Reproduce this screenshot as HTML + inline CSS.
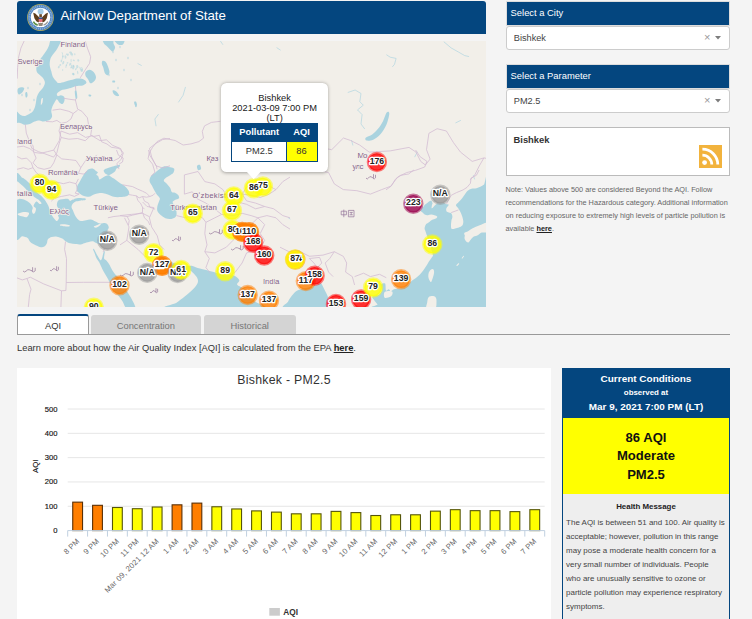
<!DOCTYPE html>
<html><head><meta charset="utf-8"><title>AirNow Department of State</title>
<style>
html,body{margin:0;padding:0}
body{width:752px;height:619px;overflow:hidden;background:#f4f4f4;font-family:"Liberation Sans",sans-serif;position:relative;color:#333}
.abs{position:absolute}
#hdr{left:17px;top:1px;width:469px;height:33px;background:#04467f;border-radius:3px 3px 0 0}
#hdr .t{position:absolute;left:43.4px;top:5.5px;font-size:13.3px;color:#fff;white-space:nowrap;line-height:17px}
#map{left:17px;top:41px;width:469px;height:266px;overflow:hidden;background:#f2efe9}
.sh{left:506px;width:222px;height:23.4px;border:1px solid #ddd;background:#04467f;color:#fff;font-size:9.4px;line-height:21px;text-indent:3.6px;white-space:nowrap}
.sel{left:506px;width:222px;height:22.8px;background:#fff;border:1px solid #ccc;border-radius:3px;font-size:9.2px;line-height:22.8px;text-indent:6.8px;color:#444}
.sel i{position:absolute;font-style:normal;color:#999;top:-.2px;text-indent:0;line-height:21px}
#city{left:506px;top:127px;width:222px;height:47px;background:#fff;border:1px solid #bbb}
#city b{position:absolute;left:6.5px;top:6px;font-size:9.4px;line-height:12px;color:#333}
#note{left:505.5px;top:182.8px;width:240px;font-size:7.33px;line-height:13.07px;color:#666;white-space:nowrap}
#note b{color:#222;text-decoration:underline}
.tab{top:314.5px;height:19.5px;background:#d4d4d4;border-radius:3px 3px 0 0;font-size:9.4px;line-height:21px;text-align:center;color:#777}
#tabA{left:17px;top:313.5px;width:70px;height:19.5px;background:#fff;border:1px solid #999;border-bottom:none;border-top:2px solid #04467f;color:#333;line-height:19px}
#tline{left:17px;top:333.5px;width:713px;height:1px;background:#999}
#learn{left:17px;top:341.5px;font-size:9.34px;line-height:12px;white-space:nowrap;color:#333}
#learn b{text-decoration:underline;color:#222}
#chart{left:17px;top:368px;width:534px;height:251px;background:#fff}
#cc{left:562px;top:368px;width:168px;height:251px;background:#eee;box-sizing:border-box;border-left:1px solid #04467f;border-right:1px solid #04467f}
#cch{left:-1px;top:0;width:168px;height:50px;background:#04467f;color:#fff;text-align:center;font-weight:bold}
#cch div{position:absolute;left:0;width:100%;white-space:nowrap}
#ccy{left:0;top:50px;width:166px;height:76.4px;background:#ffff00;color:#111;text-align:center;font-weight:bold;font-size:13.05px;line-height:18.8px}
#hm{left:0;top:132.5px;width:166px;text-align:center;font-weight:bold;font-size:7.9px;line-height:12px;color:#222}
#hmt{left:3.1px;top:147.8px;font-size:7.97px;line-height:14.05px;color:#444;white-space:nowrap}
</style></head><body>
<div id="hdr" class="abs">
<svg class="abs" style="left:10px;top:3px" width="27" height="27" viewBox="0 0 27 27">
<circle cx="13.5" cy="13.5" r="13.4" fill="#b7ad58"/><circle cx="13.5" cy="13.5" r="12.7" fill="#4c82c0"/><circle cx="13.5" cy="13.5" r="11.3" fill="none" stroke="#8fb3dc" stroke-width="1.7" stroke-dasharray="1.1 .8"/><circle cx="13.5" cy="13.5" r="9.8" fill="#fff"/>
<circle cx="13.6" cy="7.4" r="3" fill="#a6cde6"/>
<path d="M6.2 8.8L8.3 9.6L10.4 11.4L12.1 13.3L12.5 16.6L11.5 18.6L9.3 17.3L7.4 14.3ZM21 8.8L18.9 9.6L16.8 11.4L15.1 13.3L14.7 16.6L15.7 18.6L17.9 17.3L19.8 14.3Z" fill="#5f3f1f"/>
<path d="M12.3 10.2h2.6v3h-2.6z" fill="#6b4a26"/>
<path d="M11.7 13.4h3.8v1.7h-3.8z" fill="#34508c"/><path d="M11.7 15.1h3.8v2.2q-1.9 2-3.8 0z" fill="#e4707c"/>
<path d="M6.4 17.6q1.6 3.2 4.4 3.4" stroke="#5c9048" stroke-width="1.5" fill="none"/><path d="M20.8 17.6q-1.6 3.2-4.4 3.4" stroke="#9a9a9a" stroke-width="1.2" fill="none"/>
<path d="M11.2 19h4.8l-.6 3h-3.6z" fill="#6f6150" opacity=".75"/>
</svg>
<div class="t">AirNow Department of State</div></div>

<div id="map" class="abs"><svg width="469" height="266" viewBox="17 41 469 266" style="display:block">
<rect x="17" y="41" width="469" height="266" fill="#f2efe9"/>
<g fill="#aad3df"><path d="M51.3 39.7C53.2 38.7 59.7 38.7 60.9 39.7C62.1 40.7 59.6 44.1 58.8 45.8C58.0 47.5 57.0 49.2 56.1 50.6C55.2 52.0 53.8 53.3 52.9 54.6C52.0 55.9 51.0 57.0 50.5 58.6C50.0 60.2 49.6 62.9 49.7 64.9C49.8 66.9 50.8 69.4 51.3 71.3C51.8 73.2 52.1 75.4 52.9 76.9C53.7 78.4 55.2 79.9 56.1 80.9C57.0 81.9 57.4 83.0 58.8 83.1C60.2 83.2 63.0 82.3 64.9 81.8C66.8 81.3 69.0 80.6 70.9 80.1C72.8 79.6 75.1 78.7 76.8 78.5C78.5 78.3 80.2 78.4 81.6 78.7C83.0 79.0 84.5 79.7 85.3 80.4C86.1 81.1 86.7 82.3 86.3 83.1C85.9 83.9 84.1 85.0 82.7 85.5C81.3 86.0 79.0 85.7 77.3 86.0C75.6 86.3 73.8 86.9 72.1 87.4C70.4 87.9 68.3 88.5 66.8 88.9C65.3 89.3 63.7 89.3 62.5 89.7C61.3 90.1 60.2 90.8 59.3 91.4C58.4 92.0 57.2 92.9 56.9 93.7C56.6 94.5 57.1 95.8 57.7 96.1C58.3 96.4 59.9 95.2 60.9 95.3C61.9 95.4 63.5 95.9 64.1 96.8C64.7 97.7 64.7 99.6 64.4 100.8C64.1 102.0 63.3 103.7 62.5 104.0C61.7 104.3 60.2 103.2 59.3 102.4C58.4 101.6 57.7 99.2 56.9 99.2C56.1 99.2 55.2 101.2 54.5 102.4C53.8 103.6 52.9 105.0 52.4 106.4C51.9 107.8 51.3 109.7 51.3 111.2C51.3 112.7 52.2 114.7 52.1 116.0C52.0 117.3 51.3 118.4 50.5 119.2C49.7 120.0 48.5 120.4 47.3 120.8C46.1 121.2 44.6 121.6 43.3 121.6C42.0 121.6 40.7 120.5 39.3 120.5C37.9 120.5 36.1 121.0 34.6 121.6C33.1 122.2 31.3 123.5 29.8 124.0C28.3 124.5 26.4 124.9 25.0 124.8C23.6 124.7 22.5 123.7 21.0 123.2C19.5 122.7 16.5 123.5 15.7 121.6C14.9 119.7 15.0 112.3 15.7 111.2C16.4 110.1 18.8 113.9 20.2 114.7C21.6 115.5 22.9 116.0 24.2 116.0C25.5 116.0 26.9 115.0 28.2 114.4C29.5 113.8 31.2 113.0 32.2 112.0C33.2 111.0 34.0 109.4 34.6 108.0C35.2 106.6 35.4 105.0 35.8 103.2C36.2 101.4 36.3 98.6 36.9 96.8C37.5 95.0 38.3 93.6 39.3 92.1C40.3 90.6 42.4 88.8 43.3 87.3C44.2 85.8 44.9 83.9 44.9 82.5C44.9 81.1 44.1 79.7 43.3 78.5C42.5 77.3 41.1 76.3 40.1 75.3C39.1 74.3 37.5 73.4 36.9 72.1C36.3 70.8 36.2 69.0 36.5 67.3C36.8 65.6 37.5 63.5 38.5 61.7C39.5 59.9 41.2 58.0 42.5 56.2C43.8 54.4 45.5 52.3 46.5 50.6C47.5 48.9 48.1 47.5 48.9 45.8C49.7 44.1 49.4 40.7 51.3 39.7Z"/><path d="M85.6 72.1C86.2 71.1 88.3 69.7 89.6 69.7C90.9 69.7 92.6 70.9 93.6 72.1C94.6 73.3 95.9 75.5 96.0 76.9C96.1 78.3 95.3 79.9 94.4 80.9C93.5 81.9 91.4 83.6 90.4 83.3C89.4 83.0 88.8 80.5 88.0 79.3C87.2 78.1 86.0 77.3 85.6 76.1C85.2 74.9 85.0 73.1 85.6 72.1Z"/><path d="M102.4 60.9C103.0 60.5 104.7 60.8 105.6 61.7C106.5 62.6 107.4 64.8 108.0 66.5C108.6 68.2 109.5 70.7 109.5 72.1C109.5 73.5 108.8 75.2 108.0 75.3C107.2 75.4 105.6 74.2 104.8 72.9C104.0 71.6 103.7 68.7 103.2 67.3C102.7 65.9 102.0 65.1 101.9 64.1C101.8 63.1 101.8 61.3 102.4 60.9Z"/><path d="M103.2 39.7C104.6 39.1 111.1 39.1 112.7 39.7C114.3 40.3 113.1 42.2 113.5 43.4C113.9 44.6 115.2 46.1 115.1 47.4C115.0 48.7 113.6 51.1 112.7 51.4C111.8 51.7 110.5 49.9 109.5 49.0C108.5 48.1 107.3 46.7 106.4 45.8C105.5 44.9 104.5 44.4 104.0 43.4C103.5 42.4 101.8 40.3 103.2 39.7Z"/><path d="M114.3 39.7C115.6 39.2 122.5 39.0 123.9 39.7C125.3 40.4 123.9 43.4 123.1 44.2C122.3 45.0 120.3 45.3 119.1 45.0C117.9 44.7 116.7 43.4 115.9 42.6C115.1 41.8 113.0 40.2 114.3 39.7Z"/><path d="M112.7 90.5C113.1 90.1 114.9 90.5 115.9 91.3C116.9 92.1 119.0 94.5 119.1 95.3C119.2 96.1 117.6 96.4 116.7 96.1C115.8 95.8 114.1 94.6 113.5 93.7C112.9 92.8 112.3 90.9 112.7 90.5Z"/><path d="M112.7 80.6C113.1 80.4 114.8 80.6 115.1 80.9C115.4 81.2 115.1 82.3 114.7 82.5C114.3 82.7 112.7 82.5 112.4 82.2C112.1 81.9 112.3 80.8 112.7 80.6Z"/><path d="M74.8 91.3C74.9 90.1 76.0 89.8 76.4 90.8C76.8 91.8 77.4 96.4 77.3 97.6C77.2 98.8 76.1 99.4 75.7 98.4C75.3 97.4 74.7 92.5 74.8 91.3Z"/><path d="M88.8 94.5C89.2 94.3 90.9 94.6 91.2 94.9C91.5 95.2 91.1 96.3 90.7 96.5C90.3 96.7 89.1 96.5 88.8 96.2C88.5 95.9 88.4 94.7 88.8 94.5Z"/><path d="M17.8 88.9C18.3 88.0 20.0 87.4 21.0 87.3C22.0 87.2 23.9 87.3 24.2 88.1C24.5 88.9 23.4 91.1 22.6 92.1C21.8 93.1 20.2 94.4 19.4 94.5C18.6 94.6 18.1 93.8 17.8 92.9C17.5 92.0 17.3 89.8 17.8 88.9Z"/><path d="M25.3 92.9C25.5 92.0 26.5 91.6 26.9 92.1C27.3 92.6 27.7 95.2 27.5 96.1C27.3 97.0 26.3 98.1 25.9 97.6C25.5 97.1 25.1 93.8 25.3 92.9Z"/><path d="M134.3 102.4C134.3 101.5 135.5 101.2 135.9 101.6C136.3 102.0 137.0 103.9 137.0 104.8C137.0 105.7 136.3 107.6 135.9 107.2C135.5 106.8 134.3 103.3 134.3 102.4Z"/><path d="M88.6 169.3C89.8 168.7 91.4 168.3 92.6 168.6C93.8 168.9 95.1 170.4 95.9 171.0C96.7 171.6 97.8 171.7 97.9 172.3C98.0 172.9 96.3 174.0 96.3 174.6C96.3 175.2 97.7 175.5 98.2 176.3C98.7 177.1 98.8 179.3 99.5 179.5C100.2 179.7 101.6 178.2 102.6 177.7C103.6 177.2 104.6 176.5 105.6 176.1C106.6 175.7 107.9 175.3 108.6 175.3C109.3 175.3 109.1 175.4 109.9 175.9C110.7 176.4 112.5 177.6 113.9 178.6C115.3 179.6 117.1 180.9 118.5 181.9C119.9 182.9 121.3 183.8 122.5 184.6C123.7 185.4 124.9 186.2 125.9 187.2C126.9 188.2 128.0 189.5 128.5 190.6C129.0 191.7 129.4 193.1 129.2 193.9C129.0 194.7 128.2 195.4 127.2 195.9C126.2 196.4 124.7 196.6 123.2 196.8C121.7 197.0 119.6 197.2 117.9 197.2C116.2 197.2 114.2 196.9 112.6 196.5C111.0 196.1 109.4 195.0 107.9 194.5C106.4 194.0 104.7 193.4 103.2 193.2C101.7 193.0 100.1 193.0 98.6 193.2C97.1 193.4 95.3 194.0 93.9 194.5C92.5 195.0 91.2 196.2 89.9 196.5C88.6 196.8 87.3 196.7 86.0 196.5C84.7 196.3 83.2 195.8 82.0 195.2C80.8 194.6 79.5 193.4 78.6 192.6C77.7 191.8 76.8 191.0 76.6 189.9C76.4 188.8 76.8 187.3 77.3 185.9C77.8 184.5 79.2 182.7 80.0 181.2C80.8 179.7 81.8 178.0 82.6 176.6C83.4 175.2 84.3 173.8 85.3 172.6C86.3 171.4 87.4 169.9 88.6 169.3Z"/><path d="M103.9 169.9C104.5 169.2 106.5 168.5 107.9 168.0C109.3 167.5 111.1 167.0 112.6 166.6C114.1 166.2 116.0 165.6 117.2 165.3C118.4 165.0 119.6 164.6 119.9 164.9C120.2 165.2 119.7 166.7 119.2 167.3C118.7 167.9 117.1 168.0 116.5 168.6C115.9 169.2 115.8 170.5 115.2 171.3C114.6 172.1 113.6 172.7 112.6 173.3C111.6 173.9 110.3 174.9 109.2 175.0C108.1 175.1 106.7 174.3 105.9 173.9C105.1 173.5 104.6 172.9 104.3 172.3C104.0 171.7 103.3 170.6 103.9 169.9Z"/><path d="M74.0 199.2C74.3 198.7 76.7 198.2 78.0 198.1C79.3 198.0 81.6 198.1 82.0 198.5C82.4 198.9 81.6 200.1 80.6 200.5C79.6 200.9 77.1 201.4 76.0 201.2C74.9 201.0 73.7 199.7 74.0 199.2Z"/><path d="M163.8 166.4C165.6 166.0 168.5 166.8 170.2 167.2C171.9 167.6 173.7 167.9 174.2 168.8C174.7 169.7 174.0 171.8 173.4 172.8C172.8 173.8 171.4 174.4 170.2 175.2C169.0 176.0 167.2 176.7 166.2 177.6C165.2 178.5 163.7 179.7 163.8 180.7C163.9 181.7 166.0 182.7 167.0 183.9C168.0 185.1 169.4 186.6 170.2 187.9C171.0 189.2 171.0 191.1 171.8 191.9C172.6 192.7 174.0 192.2 175.0 192.7C176.0 193.2 177.6 194.2 178.2 195.1C178.8 196.0 179.5 197.5 179.0 198.3C178.5 199.1 176.0 199.3 175.0 199.9C174.0 200.5 172.5 201.0 172.6 202.3C172.7 203.6 175.2 206.0 175.8 207.9C176.4 209.8 176.7 212.8 176.6 214.3C176.5 215.8 176.0 216.6 175.0 217.4C174.0 218.2 171.7 218.9 170.2 219.0C168.7 219.1 166.9 218.8 165.4 218.2C163.9 217.6 161.9 216.2 160.6 215.1C159.3 214.0 157.9 212.5 157.4 211.1C156.9 209.7 157.1 207.8 157.4 206.3C157.7 204.8 158.6 202.8 159.0 201.5C159.4 200.2 160.2 199.5 159.8 198.3C159.4 197.1 157.5 195.6 156.6 194.3C155.7 193.0 155.1 191.7 154.3 190.3C153.5 188.9 152.7 187.0 151.9 185.5C151.1 184.0 149.6 182.2 149.5 180.7C149.4 179.2 150.2 177.3 151.1 176.0C152.0 174.7 153.8 173.8 155.1 172.8C156.4 171.8 157.6 170.6 159.0 169.6C160.4 168.6 162.0 166.8 163.8 166.4Z"/><path d="M15.9 177.0C16.9 167.7 20.5 177.1 22.3 177.7C24.1 178.3 25.6 179.8 27.0 181.0C28.4 182.2 29.4 183.2 31.0 185.0C32.6 186.8 35.1 190.4 36.9 192.3C38.7 194.2 40.9 195.5 42.3 196.9C43.7 198.3 44.7 199.5 45.6 200.9C46.5 202.3 47.6 204.2 48.2 205.6C48.8 207.0 49.2 208.3 49.6 209.6C50.0 210.9 50.4 212.4 50.9 213.6C51.4 214.8 52.3 216.0 52.9 216.9C53.5 217.8 54.3 218.8 54.9 219.5C55.5 220.2 56.3 221.3 56.9 221.1C57.5 220.9 58.7 219.2 58.9 218.2C59.1 217.2 57.8 215.7 58.0 214.9C58.2 214.1 60.1 213.7 60.2 212.9C60.3 212.1 59.4 210.8 58.9 209.6C58.4 208.4 57.1 206.9 56.9 205.6C56.7 204.3 57.1 202.6 57.6 201.6C58.1 200.6 59.1 200.0 60.2 199.6C61.3 199.2 62.9 199.0 64.2 198.9C65.5 198.8 67.2 198.6 68.2 198.9C69.2 199.2 69.4 200.8 70.2 200.9C71.0 201.0 71.9 199.7 72.9 199.6C73.9 199.5 75.3 200.4 76.2 200.3C77.1 200.2 78.5 199.0 78.4 199.2C78.3 199.4 76.4 200.9 75.5 201.6C74.6 202.3 73.5 202.8 72.9 203.6C72.3 204.4 71.5 205.8 71.5 206.9C71.5 208.0 72.5 209.1 72.9 210.2C73.3 211.3 73.8 212.6 74.2 213.6C74.6 214.6 75.0 215.4 75.5 216.2C76.0 217.0 76.7 218.1 77.5 218.9C78.3 219.7 79.4 220.7 80.8 220.9C82.2 221.1 84.5 220.4 86.1 220.2C87.7 220.0 89.3 219.3 90.8 219.5C92.3 219.7 94.0 220.9 95.5 221.5C97.0 222.1 98.6 223.3 100.1 223.5C101.6 223.7 103.6 222.8 104.8 222.9C106.0 223.0 106.8 223.5 107.4 224.2C108.0 224.9 108.8 226.4 108.8 227.5C108.8 228.6 107.4 229.7 107.4 230.9C107.4 232.1 108.3 233.3 108.5 234.8C108.7 236.3 109.5 238.6 108.5 240.2C107.5 241.8 104.0 244.1 102.1 244.6C100.2 245.1 98.3 243.8 96.8 243.3C95.3 242.8 94.1 241.5 92.8 241.3C91.5 241.1 90.2 241.7 88.8 242.0C87.4 242.3 85.5 242.9 84.2 243.3C82.9 243.7 82.2 244.5 80.8 244.6C79.4 244.7 77.2 244.2 75.5 244.0C73.8 243.8 71.8 243.7 70.2 243.3C68.6 242.9 66.8 242.1 65.5 241.3C64.2 240.5 63.6 239.3 62.2 238.6C60.8 237.9 58.6 236.9 56.9 236.7C55.2 236.5 53.0 236.7 51.6 237.1C50.2 237.5 48.7 238.3 47.9 239.3C47.1 240.3 47.5 242.1 46.9 243.3C46.3 244.5 45.3 246.0 44.3 246.6C43.3 247.2 42.3 247.5 40.9 247.3C39.5 247.1 37.3 246.1 35.6 245.3C33.9 244.5 31.6 243.2 30.3 242.0C29.0 240.8 28.9 238.9 27.6 238.0C26.3 237.1 24.2 236.7 22.3 236.3C20.4 235.9 16.9 245.2 15.9 235.7C14.9 226.2 14.9 186.3 15.9 177.0Z"/><path d="M79.5 198.9C80.0 198.6 82.4 198.3 83.5 198.3C84.6 198.3 86.0 198.6 86.1 198.9C86.2 199.2 85.1 200.1 84.2 200.3C83.3 200.5 81.4 200.5 80.6 200.3C79.8 200.1 79.0 199.2 79.5 198.9Z"/><path d="M93.9 249.0C94.3 249.4 94.8 250.6 95.5 251.9C96.2 253.2 97.6 256.0 98.4 257.3C99.2 258.6 99.9 260.1 100.5 260.2C101.1 260.3 101.6 259.3 102.1 257.9C102.6 256.5 103.3 252.7 103.7 251.7C104.1 250.7 104.7 250.8 104.8 251.9C104.9 253.0 103.8 257.2 104.1 258.6C104.4 260.0 105.5 259.5 106.4 260.5C107.3 261.5 108.7 263.4 109.6 265.0C110.5 266.6 111.4 268.7 112.3 270.2C113.2 271.7 114.0 272.9 115.1 274.2C116.2 275.5 117.8 276.4 119.1 278.1C120.4 279.8 121.8 282.7 123.1 284.8C124.4 286.9 125.8 289.3 127.1 291.4C128.4 293.5 129.8 295.4 131.1 298.1C132.4 300.8 136.1 306.8 135.4 308.5C134.7 310.2 128.7 309.6 126.7 308.5C124.7 307.4 123.9 303.4 122.6 301.4C121.3 299.4 119.9 297.8 118.6 296.1C117.3 294.4 115.8 292.6 114.6 290.9C113.4 289.2 112.4 287.5 111.3 285.6C110.2 283.7 109.2 281.0 108.0 278.9C106.8 276.8 105.1 274.2 104.0 272.3C102.9 270.4 102.1 268.4 101.3 266.8C100.5 265.2 100.0 263.6 99.2 262.2C98.4 260.8 97.2 259.6 96.5 258.2C95.8 256.8 95.2 254.8 94.7 253.4C94.2 252.0 93.2 250.3 93.1 249.6C93.0 248.9 93.5 248.6 93.9 249.0Z"/><path d="M156.3 253.7C157.2 253.1 159.8 255.4 162.7 256.9C165.6 258.4 170.5 261.8 174.4 263.3C178.3 264.8 184.2 265.7 187.1 266.1C190.0 266.5 190.4 265.5 192.4 265.9C194.4 266.3 196.7 267.7 199.9 268.6C203.1 269.5 209.0 270.8 212.7 271.8C216.4 272.8 219.9 274.4 223.3 275.0C226.7 275.6 231.3 274.8 233.9 275.6C236.5 276.4 238.8 278.9 239.3 280.3C239.8 281.7 236.6 283.4 237.1 284.6C237.6 285.8 241.4 287.3 242.4 287.8C243.4 288.3 242.3 286.9 243.6 288.0C244.9 289.1 248.6 292.6 250.4 294.8C252.2 297.0 253.3 299.4 254.9 301.6C256.5 303.8 274.3 307.3 260.6 308.4C246.9 309.5 182.5 309.3 169.0 308.4C155.5 307.5 173.9 304.6 176.5 302.7C179.1 300.8 182.3 298.5 185.0 296.3C187.7 294.1 191.5 291.0 193.5 288.8C195.5 286.6 197.3 284.3 197.8 282.4C198.3 280.5 197.8 279.0 196.7 277.1C195.6 275.2 192.0 271.5 190.7 270.7C189.4 269.9 189.7 270.9 188.8 271.8C187.9 272.7 187.0 275.3 185.0 276.1C183.0 276.9 179.1 276.9 176.5 276.5C173.9 276.1 171.4 274.9 169.0 273.5C166.6 272.1 163.5 270.0 161.6 268.0C159.7 266.0 158.1 263.0 157.3 260.7C156.5 258.4 155.4 254.3 156.3 253.7Z"/><path d="M285.3 308.5C278.5 307.4 286.9 303.9 288.0 301.8C289.1 299.7 290.5 297.4 292.0 295.6C293.5 293.8 295.1 291.7 297.3 290.5C299.5 289.3 302.8 288.8 305.9 287.9C309.0 287.0 314.2 285.7 316.6 284.9C319.0 284.1 319.6 282.6 320.8 283.2C322.0 283.8 323.0 286.8 323.9 288.5C324.8 290.2 325.8 292.1 326.6 293.8C327.4 295.5 328.0 296.8 328.6 299.2C329.2 301.6 337.4 307.0 330.5 308.5C323.6 310.0 292.1 309.6 285.3 308.5Z"/><path d="M420.8 210.6C421.0 209.5 422.8 207.2 423.9 205.9C425.0 204.6 426.7 203.4 427.9 202.6C429.1 201.8 429.7 200.6 431.5 200.6C433.3 200.6 437.1 202.2 439.2 202.6C441.3 203.0 443.3 202.9 444.5 203.2C445.7 203.5 446.2 204.1 446.9 204.3C447.6 204.5 448.7 204.4 448.8 204.7C448.9 205.0 448.2 205.6 447.8 206.2C447.4 206.8 446.5 207.8 446.3 208.6C446.1 209.4 446.1 210.6 446.5 211.2C446.9 211.8 448.0 212.1 448.8 212.5C449.6 212.9 450.8 212.7 451.4 213.4C452.0 214.1 452.4 215.6 452.4 216.8C452.4 218.0 451.6 219.3 451.4 220.7C451.2 222.1 451.0 224.2 451 225.5C451.0 226.8 451.0 228.4 451.7 228.9C452.4 229.4 453.9 228.6 455.1 228.4C456.3 228.2 457.7 228.0 458.9 227.5C460.1 227.0 461.6 226.4 462.3 225.5C463.0 224.6 463.3 223.1 463.3 221.7C463.3 220.3 462.8 218.4 462.3 216.8C461.8 215.2 461.1 213.4 460.4 212C459.7 210.6 458.7 209.2 458 208.1C457.3 207.0 455.9 206.2 456 205.2C456.1 204.2 457.9 203.0 458.9 201.8C459.9 200.6 461.4 199.1 462.3 197.9C463.2 196.7 463.9 195.7 464.8 194.5C465.7 193.3 466.6 191.6 467.7 190.7C468.8 189.8 470.1 189.1 471.5 188.7C472.9 188.3 475.0 188.5 476.4 188.2C477.8 187.9 479.1 187.4 480.3 186.8C481.5 186.2 482.9 185.2 484.1 184.4C485.3 183.6 487.5 162.1 488 182C488.5 201.9 504.5 288.3 487.1 308.5C469.7 328.7 396.6 309.1 379.1 308.5C361.6 307.9 378.3 305.8 377.5 304.5C376.7 303.2 375.2 301.7 374.4 300.5C373.6 299.3 372.1 297.7 372.2 296.9C372.3 296.1 374.0 296.0 375.1 295.6C376.2 295.2 378.0 295.3 379.1 294.5C380.2 293.7 381.4 292.1 381.7 290.5C382.0 288.9 380.6 285.6 381.1 284.5C381.6 283.4 384.3 282.6 385.1 283.6C385.9 284.6 385.4 289.6 386.0 290.5C386.6 291.4 387.9 289.1 388.7 289.2C389.5 289.3 389.9 291.2 390.7 291.2C391.5 291.2 392.6 289.6 394.0 289.2C395.4 288.8 397.4 288.9 399.3 288.5C401.2 288.1 404.0 287.7 405.9 286.5C407.8 285.3 409.7 282.6 411.3 281.2C412.9 279.8 414.5 279.0 415.9 277.9C417.3 276.8 418.7 275.8 419.9 274.6C421.1 273.4 422.2 271.9 423.2 270.6C424.2 269.3 425.0 268.0 425.9 266.6C426.8 265.2 427.6 263.4 428.6 261.9C429.6 260.4 431.3 258.7 431.9 257.3C432.5 255.9 433.5 257.3 432.5 253.3C431.5 249.3 427.2 236.5 425.9 232.5C424.6 228.5 424.6 229.8 424.6 228.5C424.6 227.2 425.3 225.5 425.9 224.5C426.5 223.5 427.6 223.2 428.6 222.5C429.6 221.8 430.7 220.5 431.9 219.9C433.1 219.3 435.1 219.0 435.9 218.5C436.7 218.0 437.4 217.0 437.2 216.5C437.0 216.0 435.5 215.5 434.5 215.2C433.5 214.9 432.3 214.5 431.2 214.5C430.1 214.5 429.0 215.2 427.9 215.2C426.8 215.2 425.4 214.9 424.6 214.5C423.8 214.1 423.2 213.2 422.6 212.6C422.0 212.0 420.6 211.7 420.8 210.6Z"/><path d="M386.7 112.5C387.7 111.3 389.3 111.5 389.3 113.4C389.3 115.3 387.9 121.1 386.5 124.4C385.1 127.7 382.5 131.9 380.4 134.3C378.3 136.7 375.4 138.7 373.2 139.7C371.0 140.7 367.8 140.9 366.6 140.6C365.4 140.3 364.8 138.8 365.7 137.8C366.6 136.8 370.3 135.9 372.2 134.5C374.1 133.1 376.1 131.2 377.8 129.1C379.5 127.0 381.6 123.9 383.0 121.2C384.4 118.5 385.7 113.7 386.7 112.5Z"/><path d="M197 166C197.3 165.2 199.4 164.5 200 165C200.6 165.5 201.3 168.2 201 169C200.7 169.8 198.6 170.5 198 170C197.4 169.5 196.7 166.8 197 166Z"/></g>
<g fill="#f2efe9"><path d="M41.3 99.2C41.6 98.1 42.6 97.6 42.8 98.1C43.0 98.6 42.8 101.3 42.5 102.4C42.2 103.5 41.1 105.3 40.9 104.8C40.7 104.3 41.0 100.3 41.3 99.2Z"/><path d="M15.9 181.6C16.9 179.6 20.4 184.1 22.3 185.6C24.2 187.1 25.7 189.2 27.6 191.0C29.5 192.8 32.6 195.5 34.3 196.9C36.0 198.3 37.1 198.6 38.3 199.6C39.5 200.6 41.4 202.5 41.6 203.2C41.8 203.9 40.4 204.3 39.6 204.0C38.8 203.7 37.6 201.8 36.9 201.6C36.2 201.4 35.5 202.2 35.0 202.9C34.5 203.6 33.5 205.0 33.6 205.9C33.7 206.8 35.7 207.4 35.9 208.5C36.1 209.6 35.5 211.7 35.1 212.5C34.7 213.3 33.7 214.0 33.2 213.8C32.7 213.6 32.1 212.2 32.0 211.2C31.9 210.2 33.0 208.8 32.7 207.6C32.4 206.4 31.2 204.7 30.3 203.6C29.4 202.5 28.2 201.6 27.0 200.9C25.8 200.2 24.2 199.6 23.0 199.2C21.8 198.8 20.8 198.8 19.7 198.7C18.6 198.6 16.5 201.1 15.9 198.4C15.3 195.7 14.9 183.6 15.9 181.6Z"/><path d="M18.3 213.6C19.1 213.1 21.9 212.1 23.6 212.0C25.3 211.9 28.5 212.1 29.0 212.9C29.5 213.7 28.0 216.3 27.0 216.9C26.0 217.5 24.4 216.8 23.0 216.5C21.6 216.2 19.1 215.4 18.3 214.9C17.5 214.4 17.5 214.1 18.3 213.6Z"/><path d="M60.2 224.5C60.9 224.2 63.4 224.1 64.9 224.2C66.4 224.3 68.9 224.9 69.5 225.3C70.1 225.7 69.9 226.5 68.9 226.6C67.9 226.7 64.8 226.3 63.5 226.2C62.2 226.1 61.1 226.1 60.6 225.8C60.1 225.5 59.5 224.8 60.2 224.5Z"/><path d="M94.1 226.2C94.6 225.8 96.4 225.3 97.5 224.9C98.6 224.5 100.4 223.4 100.8 223.5C101.2 223.6 100.7 224.7 100.1 225.3C99.5 225.9 97.7 227.2 96.8 227.5C95.9 227.8 94.8 227.5 94.4 227.3C94.0 227.1 93.6 226.6 94.1 226.2Z"/><path d="M431.5 200.3C431.8 200.0 433.5 201.2 434.5 201.6C435.5 202.0 437.3 202.2 437.5 202.7C437.7 203.2 436.2 204.1 435.5 204.8C434.8 205.5 433.8 206.6 433.2 207.2C432.6 207.8 431.8 208.6 431.6 208.3C431.4 208.0 431.8 206.0 431.9 205.2C432.0 204.4 432.6 204.0 432.5 203.2C432.4 202.4 431.2 200.6 431.5 200.3Z"/><path d="M487.1 223.2C486.2 222.0 483.2 224.1 481.7 224.5C480.2 224.9 479.1 225.4 477.8 225.9C476.5 226.4 475.2 227.1 473.8 227.8C472.4 228.5 470.4 229.5 469.1 230.5C467.8 231.5 466.5 232.6 465.8 233.8C465.1 235.0 464.5 236.6 464.5 237.8C464.5 239.0 465.2 240.3 465.8 241.1C466.4 241.9 467.6 242.8 468.4 242.5C469.2 242.2 470.2 240.1 471.1 239.1C472.0 238.1 472.7 237.1 473.8 236.5C474.9 235.9 476.5 235.8 477.8 235.2C479.1 234.6 480.2 233.0 481.7 232.5C483.2 232.0 486.2 233.3 487.1 231.8C488.0 230.3 488.0 224.4 487.1 223.2Z"/><path d="M464.5 232.7C465.5 231.9 469.8 230.8 471.1 231.3C472.4 231.8 472.6 234.6 472.4 236.0C472.2 237.4 470.6 239.5 469.8 240.0C469.0 240.5 467.9 239.9 467.1 239.3C466.3 238.7 465.5 237.1 465.1 236.0C464.7 234.9 463.5 233.5 464.5 232.7Z"/><path d="M473.8 231.3C474.4 230.7 478.5 230.8 479.1 231.3C479.7 231.8 478.4 234.1 477.8 234.7C477.2 235.3 475.7 235.8 475.1 235.3C474.5 234.8 473.2 231.9 473.8 231.3Z"/><path d="M430.5 269.9C431.2 269.4 432.6 268.9 433.2 269.2C433.8 269.5 434.1 270.7 434.1 271.9C434.1 273.1 433.7 274.9 433.2 276.5C432.7 278.1 431.8 281.3 431.2 281.9C430.6 282.5 430.1 281.4 429.6 280.5C429.1 279.6 428.4 277.8 428.3 276.5C428.2 275.2 428.4 273.7 428.8 272.6C429.2 271.5 429.8 270.4 430.5 269.9Z"/><path d="M428.6 297.2C429.6 296.2 432.0 296.0 433.2 296.1C434.4 296.2 435.4 296.9 435.9 297.8C436.4 298.7 436.6 300.1 436.5 301.8C436.4 303.5 436.8 307.4 435.2 308.5C433.6 309.6 427.9 309.5 426.6 308.5C425.3 307.5 426.9 304.3 427.2 302.5C427.5 300.7 427.6 298.2 428.6 297.2Z"/><path d="M384.7 292.1C385.8 291.0 390.0 291.0 391.3 291.2C392.6 291.4 392.7 292.4 392.6 293.2C392.5 294.0 392.0 295.8 390.7 296.5C389.4 297.2 385.7 298.5 384.7 297.8C383.7 297.1 383.6 293.2 384.7 292.1Z"/><path d="M456.5 265.2C456.7 264.8 458.1 263.4 458.5 263.2C458.9 263.0 459.3 263.5 459.1 263.9C458.9 264.3 457.5 265.7 457.1 265.9C456.7 266.1 456.3 265.6 456.5 265.2Z"/><path d="M461.8 257.9C462.0 257.5 463.1 256.1 463.4 255.9C463.7 255.7 464.1 256.2 463.9 256.6C463.7 257.0 462.6 258.4 462.3 258.6C462.0 258.8 461.6 258.3 461.8 257.9Z"/></g><g fill="#aad3df" fill-opacity=".55"><ellipse cx="66.7" cy="54.3" rx="0.9" ry="0.7" transform="rotate(4 66.7 54.3)"/><ellipse cx="60.3" cy="65.0" rx="1.0" ry="0.9" transform="rotate(-25 60.3 65.0)"/><ellipse cx="69.8" cy="52.3" rx="0.5" ry="1.1" transform="rotate(22 69.8 52.3)"/><ellipse cx="73.5" cy="74.0" rx="0.8" ry="1.3" transform="rotate(-27 73.5 74.0)"/><ellipse cx="73.8" cy="60.4" rx="1.1" ry="0.7" transform="rotate(24 73.8 60.4)"/><ellipse cx="61.4" cy="60.9" rx="0.8" ry="1.3" transform="rotate(5 61.4 60.9)"/><ellipse cx="73.9" cy="66.4" rx="0.7" ry="1.3" transform="rotate(-26 73.9 66.4)"/><ellipse cx="73.4" cy="65.9" rx="0.7" ry="1.2" transform="rotate(19 73.4 65.9)"/><ellipse cx="66.5" cy="65.1" rx="0.7" ry="1.0" transform="rotate(20 66.5 65.1)"/><ellipse cx="62.7" cy="69.9" rx="0.5" ry="1.0" transform="rotate(1 62.7 69.9)"/><ellipse cx="82.1" cy="68.6" rx="0.6" ry="1.8" transform="rotate(-23 82.1 68.6)"/><ellipse cx="72.0" cy="54.7" rx="0.6" ry="1.7" transform="rotate(-4 72.0 54.7)"/><ellipse cx="58.8" cy="67.1" rx="0.9" ry="1.3" transform="rotate(26 58.8 67.1)"/><ellipse cx="67.5" cy="62.9" rx="1.0" ry="0.7" transform="rotate(-25 67.5 62.9)"/><ellipse cx="77.3" cy="66.6" rx="1.1" ry="1.6" transform="rotate(-12 77.3 66.6)"/><ellipse cx="77.7" cy="72.5" rx="0.6" ry="1.7" transform="rotate(-8 77.7 72.5)"/><ellipse cx="62.4" cy="53.5" rx="0.4" ry="1.5" transform="rotate(-22 62.4 53.5)"/><ellipse cx="78.3" cy="60.4" rx="1.0" ry="1.2" transform="rotate(-20 78.3 60.4)"/><ellipse cx="70.2" cy="64.2" rx="1.0" ry="1.6" transform="rotate(25 70.2 64.2)"/><ellipse cx="73.1" cy="68.0" rx="1.1" ry="1.4" transform="rotate(-6 73.1 68.0)"/><ellipse cx="62.6" cy="56.3" rx="0.6" ry="1.2" transform="rotate(7 62.6 56.3)"/><ellipse cx="62.8" cy="57.5" rx="0.5" ry="1.2" transform="rotate(9 62.8 57.5)"/><ellipse cx="73.5" cy="74.1" rx="0.9" ry="1.2" transform="rotate(9 73.5 74.1)"/><ellipse cx="76.0" cy="68.9" rx="0.7" ry="1.6" transform="rotate(30 76.0 68.9)"/><ellipse cx="82.1" cy="70.3" rx="0.7" ry="1.1" transform="rotate(-24 82.1 70.3)"/><ellipse cx="71.1" cy="60.5" rx="0.5" ry="1.8" transform="rotate(-2 71.1 60.5)"/><ellipse cx="62.2" cy="59.0" rx="0.4" ry="0.6" transform="rotate(-21 62.2 59.0)"/><ellipse cx="72.7" cy="74.0" rx="0.8" ry="0.7" transform="rotate(-17 72.7 74.0)"/><ellipse cx="74.8" cy="54.2" rx="0.6" ry="1.0" transform="rotate(-7 74.8 54.2)"/><ellipse cx="70.9" cy="53.4" rx="0.7" ry="1.8" transform="rotate(0 70.9 53.4)"/><ellipse cx="71.2" cy="52.7" rx="0.5" ry="1.0" transform="rotate(-14 71.2 52.7)"/><ellipse cx="71.1" cy="67.7" rx="0.8" ry="0.8" transform="rotate(30 71.1 67.7)"/><ellipse cx="72.4" cy="54.2" rx="0.8" ry="0.6" transform="rotate(3 72.4 54.2)"/><ellipse cx="66.0" cy="66.5" rx="0.5" ry="1.6" transform="rotate(3 66.0 66.5)"/><ellipse cx="67.9" cy="54.7" rx="0.9" ry="1.2" transform="rotate(19 67.9 54.7)"/><ellipse cx="71.7" cy="66.3" rx="0.8" ry="1.5" transform="rotate(18 71.7 66.3)"/><ellipse cx="81.5" cy="70.5" rx="1.0" ry="1.5" transform="rotate(-16 81.5 70.5)"/><ellipse cx="63.3" cy="62.8" rx="0.9" ry="1.8" transform="rotate(20 63.3 62.8)"/><ellipse cx="65.5" cy="57.0" rx="0.9" ry="1.7" transform="rotate(-2 65.5 57.0)"/><ellipse cx="80.3" cy="68.5" rx="0.6" ry="1.8" transform="rotate(-25 80.3 68.5)"/><ellipse cx="63.8" cy="56.2" rx="0.5" ry="0.8" transform="rotate(9 63.8 56.2)"/><ellipse cx="113" cy="52" rx=".8" ry="1.2"/><ellipse cx="116" cy="60" rx=".8" ry="1.2"/><ellipse cx="120" cy="47" rx=".8" ry="1.2"/><ellipse cx="124" cy="70" rx=".8" ry="1.2"/><ellipse cx="128" cy="58" rx=".8" ry="1.2"/><ellipse cx="109" cy="75" rx=".8" ry="1.2"/><ellipse cx="131" cy="80" rx=".8" ry="1.2"/><ellipse cx="118" cy="88" rx=".8" ry="1.2"/><ellipse cx="28" cy="88" rx=".8" ry="1.2"/><ellipse cx="22" cy="95" rx=".8" ry="1.2"/><ellipse cx="34" cy="100" rx=".8" ry="1.2"/><ellipse cx="40" cy="84" rx=".8" ry="1.2"/><ellipse cx="30" cy="110" rx=".8" ry="1.2"/></g><g fill="none" stroke="#aad3df" stroke-width=".8" stroke-opacity=".8" stroke-linecap="round"><path d="M444.1 42.0L451.1 47.9L458.2 51.9L464.7 55.6L468.7 56.5"/><path d="M386.7 54.9L390.2 57.2L396.1 58.4L394.5 64.3L392.6 66.6"/><path d="M348.1 92.4L355.1 90.0L361.0 93.5L359.8 101.7L363.3 105.2L357.5 109.9L362.1 114.6L361.0 124.0L364.5 128.7"/><path d="M455.8 122.8L460.5 120.5"/><path d="M351.6 140.4L352.8 145.1"/><path d="M414.8 156.8L417.2 152.1"/><path d="M473.4 175.5L474.5 179.0"/><path d="M185.4 87.3L183.1 95.3L178.6 102.0"/><path d="M158.3 114.5L154.9 119.0L156.0 125.8"/><path d="M134.5 102.0L135.7 106.6"/><path d="M220.4 41.0L222.7 44.4"/><path d="M276.9 47.8L280.3 50.0"/><path d="M137.9 63.6L141.3 65.4"/><path d="M255.6 179.4L262.4 178.3L268.1 180.5"/><path d="M288.4 217.8L290.0 218.9"/></g>
<g fill="none" stroke="#d3bdd3" stroke-width=".8" stroke-linejoin="round"><path d="M85.2 40.9L87.4 48.1L90.7 56.8L89.6 63.3L85.2 69.9L80.2 77.9"/><path d="M24.2 40.9L20.9 48.1L18.7 56.8L17.6 67.7L17.2 78.6"/><path d="M75.4 85.6L75.8 90.6"/><path d="M76.3 98.2L75.4 100.0"/><path d="M63.4 98.2L69.9 99.3L75.4 100.0L77.6 109.1L81.9 111.3"/><path d="M52.5 110.2L60.1 109.1L68.9 111.3L73.2 113.5L77.6 110.2"/><path d="M73.2 113.5L71.0 118.9L66.7 122.2L61.2 123.3"/><path d="M46.0 121.5L52.5 121.8L56.9 120.4L61.2 123.3L59.0 130.9L61.2 137.5"/><path d="M81.9 111.3L87.4 117.8L88.5 124.4L91.7 128.7L90.7 135.3L93.9 136.4"/><path d="M61.2 137.5L68.9 139.2L77.6 138.5L85.2 140.7L90.7 135.7"/><path d="M93.9 136.4L99.4 135.3L101.6 141.8L107.0 144.0L111.4 147.3L119.0 148.4L123.4 152.7L121.2 159.3L116.8 163.6L119.0 169.1"/><path d="M61.2 137.5L59.0 144.0L56.9 152.7L53.6 157.1"/><path d="M25.3 124.4L26.3 133.1L29.6 141.8L31.8 148.4L38.3 151.6L44.9 153.8L53.6 157.1"/><path d="M170.0 138.5L162.6 139.6L155.0 144.0L149.5 148.4L151.7 157.1L156.0 165.8L162.6 168.0L170.0 165.8"/><path d="M17.0 147.0L23.4 146.2L29.8 148.6L34.6 152.5L40.9 153.3L47.3 151.7L53.7 150.1"/><path d="M53.7 150.1L59.3 140.6L60.9 131.0"/><path d="M53.7 150.1L56.9 154.9L61.7 158.9L69.7 159.7L76.0 160.5L80.8 167.7L78.4 173.3L84.0 174.1L87.2 170.9"/><path d="M33.8 152.5L36.1 158.1L33.0 162.9L37.7 167.7L44.1 169.3L50.5 167.7L53.7 162.9L56.9 154.9"/><path d="M17.0 156.5L21.8 158.9L26.6 158.1L31.4 162.9L33.0 167.7L28.2 169.3L23.4 167.7L17.0 169.3"/><path d="M33.0 167.7L36.1 172.5L40.9 176.5L47.3 178.9L51.3 183.7"/><path d="M51.3 183.7L56.9 182.1L63.3 183.7L69.7 182.1L76.0 183.7L78.4 178.9"/><path d="M51.3 183.7L52.9 190.0L51.3 194.8L54.5 198.0L51.3 201.2"/><path d="M54.5 198.0L61.7 196.4L69.7 194.8L74.4 196.4L79.2 194.0"/><path d="M76.0 183.7L77.6 189.2L75.2 193.2L79.2 194.0"/><path d="M60.9 131.0L69.7 134.2L77.6 132.6L85.6 137.4L92.0 135.8L100.0 140.6L106.4 139.8L112.7 145.4L120.7 148.6L122.3 153.3L119.1 158.1L112.7 161.3"/><path d="M80.8 167.7L84.0 162.9L87.2 158.1L92.0 159.7L96.8 154.9"/><path d="M17.0 140.6L21.8 143.8L28.2 142.2L33.0 145.4L33.8 152.5"/><path d="M122.5 184.8L127.2 185.6L132.5 186.6L137.8 189.2L142.5 191.2L146.5 193.2L149.8 196.5"/><path d="M128.5 194.5L132.5 195.2L136.5 195.9L139.1 197.9L142.5 196.5L146.5 197.2"/><path d="M136.5 195.9L137.8 200.5L140.5 203.2L142.5 207.2L144.5 209.2"/><path d="M142.5 196.5L144.5 201.2L148.5 203.2L149.8 207.2L155.1 209.2"/><path d="M146.5 197.2L149.8 196.5L153.1 195.2L155.1 193.2"/><path d="M107.9 217.8L113.9 216.5L120.5 215.8L127.2 216.5L132.5 215.2L137.8 213.8L142.5 212.5"/><path d="M142.5 207.2L142.5 212.5L144.5 217.8L148.5 221.8L149.8 225.0"/><path d="M127.2 216.5L129.2 220.5L128.5 225.0"/><path d="M148.5 150.0L149.8 155.3L153.1 160.6L156.4 166.0L157.1 169.3"/><path d="M116.5 150.0L118.5 155.3L123.2 158.0L122.5 162.0L119.2 164.0"/><path d="M65.5 241.6L64.6 249.3L66.5 258.6L66.2 282.5L65.9 290.5"/><path d="M66.2 282.5L83.5 282.3L96.8 282.3L110.1 282.3"/><path d="M65.9 290.5L61.5 290.8L60.9 307.0"/><path d="M17.0 277.9L22.3 279.9L27.0 278.5L30.3 277.2L43.6 283.9L61.5 290.8"/><path d="M27.0 278.5L29.0 283.9L31.0 289.2L29.6 294.5L28.3 307.0"/><path d="M103.2 251.9L104.8 248.0L108.8 249.3"/><path d="M220.4 121.3L211.4 122.4L204.6 125.8L202.3 131.4L203.5 138.2L198.9 141.6L191.0 143.9L183.1 145.0L175.2 140.5L163.9 138.2L157.1 141.6L152.6 147.3L149.2 152.9L148.1 158.6L152.6 164.2L154.9 172.1L151.5 176.0"/><path d="M184.4 194.1L184.4 174.9L198.0 171.5L204.8 181.6L214.9 183.9L222.9 189.6L226.3 195.2"/><path d="M184.4 194.1L192.3 191.8L196.9 198.6L205.9 203.1L217.2 211.0L221.7 214.4"/><path d="M176.5 215.6L185.6 217.8L194.6 214.4L202.5 217.8L205.9 222.3"/><path d="M205.9 222.3L204.8 233.6L207.0 244.9L204.8 251.7"/><path d="M204.8 251.7L209.3 258.5L205.9 267.6L210.4 273.2"/><path d="M204.8 251.7L214.9 252.9L226.3 247.2L233.0 240.4L237.6 233.6L243.2 229.1L251.1 224.6L257.9 217.8"/><path d="M205.9 222.3L214.9 217.8L221.7 214.4L233.0 215.6L242.1 213.3L251.1 215.6L257.9 217.8"/><path d="M149.4 217.8L151.6 226.9L157.3 235.9L159.6 244.9L164.1 249.5"/><path d="M142.6 202.0L147.1 206.5L153.9 207.6L149.4 217.8"/><path d="M120.0 215.6L131.3 214.4L142.6 213.3L149.4 216.7"/><path d="M126.8 240.4L138.1 249.5L144.9 256.3L151.6 258.5"/><path d="M124.5 217.8L129.0 226.9L126.8 240.4L120.0 244.9"/><path d="M257.9 217.8L264.7 224.6L260.2 233.6L264.7 240.4L260.2 247.2L251.1 251.7L246.6 252.9L242.1 263.0L235.3 272.1L228.5 276.6"/><path d="M257.9 217.8L266.9 215.6L276.0 217.8L282.8 224.6L290.0 229.1"/><path d="M242.1 194.1L251.1 195.2L260.2 197.5L269.2 194.1L276.0 189.6L269.2 186.2L257.9 183.9L246.6 187.3L242.1 194.1"/><path d="M237.6 202.0L246.6 204.3L255.6 208.8L264.7 206.5L255.6 203.1L246.6 200.9L242.1 194.1"/><path d="M276.0 189.6L282.8 181.6L290.0 177.1"/><path d="M264.7 206.5L273.7 208.8L282.8 215.6L290.0 217.8"/><path d="M328.6 172.6L334.3 183.9L343.3 189.6L356.9 190.7L370.4 194.1L381.7 189.6L390.8 186.2L397.6 177.1L406.6 172.6L415.6 170.3L424.7 167.0L426.9 161.3L420.2 156.8L415.6 150.0"/><path d="M280.0 247.2L289.0 251.7L298.1 250.6L309.4 256.3L323.0 255.1L334.3 251.7L343.3 256.3L346.7 263.0L345.6 272.1L352.3 276.6L354.6 285.0"/><path d="M309.4 258.5L319.6 257.4L321.8 263.0L317.3 267.6L313.9 263.0L309.4 258.5"/><path d="M334.3 251.7L329.7 258.5L325.2 263.0L328.6 272.1L333.1 276.6"/><path d="M354.6 276.6L363.6 273.2L370.4 276.6L379.5 274.3L386.3 277.7"/><path d="M328.6 172.6L318.4 170.3L309.4 163.6L302.6 156.8L293.6 150.0"/><path d="M320.0 147.4L331.7 149.7L343.4 138.0L350.4 140.4L359.8 145.1L369.2 152.1L390.2 150.9L409.0 147.4L416.0 152.1L420.7 161.4L425.4 165.0L430.1 159.1L426.5 149.7L428.9 133.3L437.1 128.7L446.4 131.0L453.5 142.7L460.5 152.1L472.2 161.4L483.9 157.9L490.0 159.1"/><path d="M483.9 157.9L479.2 166.1L474.5 175.5L469.9 179.9"/><path d="M386.0 189.9L391.3 186.0L395.3 179.3L400.6 175.3L408.6 174.0L413.9 170.0"/><path d="M446.5 203.9L451.2 195.3L456.5 192.6L463.1 189.9L467.1 187.3L470.4 183.3L471.1 178.0L476.4 175.3L479.1 170.0"/><path d="M451.2 212.6L455.1 211.2L458.5 209.9"/></g>
<g font-family="Liberation Sans" fill="#83618a" stroke="#f2efe9" stroke-width="1.6" paint-order="stroke" stroke-linejoin="round" ><text x="60.6" y="46.5" font-size="7.9" textLength="24.6">Finland</text><text x="17.6" y="63.6" font-size="7.9" textLength="25.1">Sverige</text><text x="60.1" y="129" font-size="7.9" textLength="32.3">Беларусь</text><text x="17.2" y="144.3" font-size="7.9" textLength="14.6">land</text><text x="86.1" y="161.4" font-size="7.9" textLength="26.6">Україна</text><text x="48.1" y="175" font-size="7.9" textLength="29.5">România</text><text x="17" y="195.8" font-size="7.9" textLength="15.2">talia</text><text x="49.6" y="214.2" font-size="7.9" textLength="19.3">Ελλάς</text><text x="93.6" y="210.2" font-size="7.9" textLength="24.2">Türkiye</text><text x="192.3" y="198.1" font-size="7.9" textLength="43">Oʻzbekiston</text><text x="170.2" y="210.1" font-size="7.9" textLength="46.6">Türkmenistan</text><text x="262.9" y="283.6" font-size="7.9" textLength="16.5">India</text><text x="206.6" y="161.4" font-size="7.9" textLength="11.7">Қаз</text><text x="357.4" y="158" font-size="7.9" textLength="10">Мо</text><text x="352.5" y="168.8" font-size="7.9" textLength="11">улс</text></g><g fill="none" stroke="#93749a" stroke-width=".7"><path d="M23 271q1.6 2 3.2 0t3.2 -1.2t3.2 1v-3.6m2.6 .6v3q-1.3 1.8-3.4 .6"/><path d="M50 270q1.1 2 2.2 0t2.2 -1.2t2.2 1v-3.6m1.8 .6v3q-0.9 1.8-2.3 .6"/><path d="M172 240q1.1 2 2.2 0t2.2 -1.2t2.2 1v-3.6m1.8 .6v3q-0.9 1.8-2.3 .6"/><path d="M209 233q1.7 2 3.5 0t3.5 -1.2t3.5 1v-3.6m2.8 .6v3q-1.4 1.8-3.6 .6"/><path d="M231 249q1.6 2 3.2 0t3.2 -1.2t3.2 1v-3.6m2.6 .6v3q-1.3 1.8-3.4 .6"/><path d="M136 235q1.6 2 3.2 0t3.2 -1.2t3.2 1v-3.6m2.6 .6v3q-1.3 1.8-3.4 .6"/><path d="M120 275q1.7 2 3.5 0t3.5 -1.2t3.5 1v-3.6m2.8 .6v3q-1.4 1.8-3.6 .6"/><path d="M150 292q1.0 2 2.0 0t2.0 -1.2t2.0 1v-3.6m1.6 .6v3q-0.8 1.8-2.1 .6"/><path d="M366 178q1.2 2 2.5 0t2.5 -1.2t2.5 1v-3.6m2.0 .6v3q-1.0 1.8-2.6 .6"/><path d="M341.2 211.2h5.2v3.6h-5.2zM343.8 209.6v7.6M348.4 210.4h5.6v6.4h-5.6zM349.6 212.4h3.2M349.6 214.8h3.2M351.2 212.4v2.4"/></g>
<g fill-opacity=".8" stroke-opacity=".5" stroke-width="2.8"><circle cx="39.6" cy="183.8" r="8.8" fill="#ffff00" stroke="#ffff00"/><circle cx="51.5" cy="189.9" r="8.8" fill="#ffff00" stroke="#ffff00"/><circle cx="107.3" cy="240.8" r="8.8" fill="#999999" stroke="#999999"/><circle cx="139.2" cy="234.7" r="8.8" fill="#999999" stroke="#999999"/><circle cx="153.6" cy="253.1" r="8.8" fill="#ffff00" stroke="#ffff00"/><circle cx="162.1" cy="265.8" r="8.8" fill="#ff7e00" stroke="#ff7e00"/><circle cx="162.1" cy="265.8" r="8.8" fill="#ff7e00" stroke="#ff7e00"/><circle cx="147.2" cy="272.9" r="8.8" fill="#999999" stroke="#999999"/><circle cx="177.6" cy="273.1" r="8.8" fill="#999999" stroke="#999999"/><circle cx="181.2" cy="269.9" r="8.8" fill="#ffff00" stroke="#ffff00"/><circle cx="119.5" cy="285.4" r="8.8" fill="#ff7e00" stroke="#ff7e00"/><circle cx="93.8" cy="307.8" r="8.8" fill="#ffff00" stroke="#ffff00"/><circle cx="192.8" cy="213.6" r="8.8" fill="#ffff00" stroke="#ffff00"/><circle cx="233.8" cy="196.4" r="8.8" fill="#ffff00" stroke="#ffff00"/><circle cx="231.9" cy="210.7" r="8.8" fill="#ffff00" stroke="#ffff00"/><circle cx="262.9" cy="186.5" r="8.8" fill="#ffff00" stroke="#ffff00"/><circle cx="253.8" cy="188.2" r="8.8" fill="#ffff00" stroke="#ffff00"/><circle cx="232.5" cy="229.9" r="8.8" fill="#ffff00" stroke="#ffff00"/><circle cx="242.2" cy="231.9" r="8.8" fill="#ff7e00" stroke="#ff7e00"/><circle cx="242.2" cy="231.9" r="8.8" fill="#ff7e00" stroke="#ff7e00"/><circle cx="249" cy="232.2" r="8.8" fill="#ff7e00" stroke="#ff7e00"/><circle cx="249" cy="232.2" r="8.8" fill="#ff7e00" stroke="#ff7e00"/><circle cx="253.2" cy="242.8" r="8.8" fill="#ff0000" stroke="#ff0000"/><circle cx="264.2" cy="255.5" r="8.8" fill="#ff0000" stroke="#ff0000"/><circle cx="295.4" cy="259.6" r="8.8" fill="#ff7e00" stroke="#ff7e00"/><circle cx="295" cy="259.5" r="8.8" fill="#ffff00" stroke="#ffff00"/><circle cx="225.2" cy="271.3" r="8.8" fill="#ffff00" stroke="#ffff00"/><circle cx="305.8" cy="281.1" r="8.8" fill="#ff7e00" stroke="#ff7e00"/><circle cx="314.6" cy="275.8" r="8.8" fill="#ff0000" stroke="#ff0000"/><circle cx="247.7" cy="295.0" r="8.8" fill="#ff7e00" stroke="#ff7e00"/><circle cx="269" cy="300.6" r="8.8" fill="#ff7e00" stroke="#ff7e00"/><circle cx="336" cy="303.9" r="8.8" fill="#ff0000" stroke="#ff0000"/><circle cx="361.1" cy="299.5" r="8.8" fill="#ff0000" stroke="#ff0000"/><circle cx="373.1" cy="287.5" r="8.8" fill="#ffff00" stroke="#ffff00"/><circle cx="401.1" cy="279.2" r="8.8" fill="#ff7e00" stroke="#ff7e00"/><circle cx="432.3" cy="244.5" r="8.8" fill="#ffff00" stroke="#ffff00"/><circle cx="413.3" cy="203.7" r="8.8" fill="#99004c" stroke="#99004c"/><circle cx="440.3" cy="194.7" r="8.8" fill="#999999" stroke="#999999"/><circle cx="376.9" cy="162.0" r="8.8" fill="#ff0000" stroke="#ff0000"/></g>
<g font-family="Liberation Sans" font-weight="bold" font-size="8.7" text-anchor="middle" fill="#222" stroke="#fff" stroke-width="2.7" stroke-linejoin="round" paint-order="stroke"><text x="39.6" y="185.4">80</text><text x="51.5" y="191.5">94</text><text x="107.3" y="242.4">N/A</text><text x="139.2" y="236.3">N/A</text><text x="153.6" y="254.7">72</text><text x="159.1" y="267.8">11</text><text x="162.1" y="267.4">127</text><text x="147.2" y="274.5">N/A</text><text x="177.6" y="274.7">N/A</text><text x="181.2" y="271.5">61</text><text x="119.5" y="287.0">102</text><text x="93.8" y="309.4">90</text><text x="192.8" y="215.2">65</text><text x="233.8" y="198.0">64</text><text x="231.9" y="212.3">67</text><text x="262.9" y="188.1">75</text><text x="253.8" y="189.8">86</text><text x="232.5" y="231.5">80</text><text x="242.2" y="233.5">101</text><text x="249" y="233.8">110</text><text x="253.2" y="244.4">168</text><text x="264.2" y="257.1">160</text><text x="296.9" y="261.40000000000003">84</text><text x="295" y="261.1">87</text><text x="225.2" y="272.9">89</text><text x="305.8" y="282.7">117</text><text x="314.6" y="277.4">158</text><text x="247.7" y="296.6">137</text><text x="269" y="302.2">137</text><text x="336" y="305.5">153</text><text x="361.1" y="301.1">159</text><text x="373.1" y="289.1">79</text><text x="401.1" y="280.8">139</text><text x="432.3" y="246.1">86</text><text x="413.3" y="205.3">223</text><text x="440.3" y="196.3">N/A</text><text x="376.9" y="163.6">176</text></g>
</svg>
<div class="abs" id="pop" style="left:203.5px;top:41.5px;width:107px;height:89px;background:#fff;border-radius:5.5px;box-shadow:0 .5px 3.5px rgba(0,0,0,.32)"></div>
<svg class="abs" style="left:229px;top:130px" width="16" height="10" viewBox="0 0 16 10"><path d="M0 0L7.7 8.3L15.4 0Z" fill="#fff"/></svg>
<div class="abs" style="left:204.1px;top:51.8px;width:107px;text-align:center;font-size:9.3px;line-height:10.3px;color:#1a1a1a">Bishkek<br>2021-03-09 7:00 PM<br>(LT)</div>
<div class="abs" style="left:214px;top:82.2px;width:86.5px;height:38.6px;border:1px solid #04467f;box-sizing:border-box;background:#fff">
 <div class="abs" style="left:0;top:0;width:84.5px;height:17.6px;background:#04467f"></div>
 <div class="abs" style="left:53.6px;top:17.6px;width:30.9px;height:19px;background:#ffff00;border-left:1px solid #04467f"></div>
 <div class="abs" style="left:0;top:2.6px;width:54.5px;text-align:center;color:#fff;font-weight:bold;font-size:9.3px;line-height:11px">Pollutant</div>
 <div class="abs" style="left:54.5px;top:2.6px;width:30px;text-align:center;color:#fff;font-weight:bold;font-size:9.3px;line-height:11px">AQI</div>
 <div class="abs" style="left:0;top:21.5px;width:54.5px;text-align:center;color:#333;font-size:9.3px;line-height:11px">PM2.5</div>
 <div class="abs" style="left:54.5px;top:21.5px;width:30px;text-align:center;color:#333;font-size:9.3px;line-height:11px">86</div>
</div>
</div>

<div class="abs sh" style="top:.8px">Select a City</div>
<div class="abs sel" style="top:25.7px">Bishkek<i style="left:197px;font-size:11px">×</i><svg class="abs" style="left:208.4px;top:8.9px" width="7" height="4"><path d="M0 0h6L3 3.4Z" fill="#7d7d7d"/></svg></div>
<div class="abs sh" style="top:63.8px">Select a Parameter</div>
<div class="abs sel" style="top:88.7px">PM2.5<i style="left:197px;font-size:11px">×</i><svg class="abs" style="left:208.4px;top:8.9px" width="7" height="4"><path d="M0 0h6L3 3.4Z" fill="#7d7d7d"/></svg></div>
<div id="city" class="abs"><b>Bishkek</b>
<svg class="abs" style="left:192px;top:17px" width="23" height="23" viewBox="0 0 23 23"><rect width="23" height="23" fill="#f2b33d"/><circle cx="5.6" cy="17.6" r="2.4" fill="#fff"/><path d="M3.4 10.2a9.4 9.4 0 0 1 9.4 9.4M3.4 4.2a15.4 15.4 0 0 1 15.4 15.4" stroke="#fff" stroke-width="2.8" fill="none"/></svg></div>
<div id="note" class="abs">Note: Values above 500 are considered Beyond the AQI. Follow<br>recommendations for the Hazardous category. Additional information<br>on reducing exposure to extremely high levels of particle pollution is<br>available <b>here</b>.</div>

<div id="tabA" class="abs tab">AQI</div>
<div class="abs tab" style="left:90.5px;width:110.7px">Concentration</div>
<div class="abs tab" style="left:203.7px;width:92px">Historical</div>
<div id="tline" class="abs"></div>
<div id="learn" class="abs">Learn more about how the Air Quality Index [AQI] is calculated from the EPA <b>here</b>.</div>

<div id="chart" class="abs"><svg width="534" height="251" viewBox="17 368 534 251" style="display:block" font-family="Liberation Sans">
<text x="237.3" y="384.3" font-size="12.3" fill="#333" textLength="93.3">Bishkek - PM2.5</text>
<g stroke="#e6e6e6" stroke-width="1" fill="none"><path d="M67.7 506.28H544.7"/><path d="M67.7 481.96H544.7"/><path d="M67.7 457.64H544.7"/><path d="M67.7 433.32H544.7"/><path d="M67.7 409.00H544.7"/></g>
<g shape-rendering="auto"><rect x="72.74" y="502.15" width="9.8" height="28.45" fill="#ff7e00" stroke="#5a2f05" stroke-width="1.1"/><rect x="92.61" y="505.31" width="9.8" height="25.29" fill="#ff7e00" stroke="#5a2f05" stroke-width="1.1"/><rect x="112.49" y="507.50" width="9.8" height="23.10" fill="#ffff00" stroke="#55550a" stroke-width="1.1"/><rect x="132.36" y="508.71" width="9.8" height="21.89" fill="#ffff00" stroke="#55550a" stroke-width="1.1"/><rect x="152.24" y="507.01" width="9.8" height="23.59" fill="#ffff00" stroke="#55550a" stroke-width="1.1"/><rect x="172.11" y="504.82" width="9.8" height="25.78" fill="#ff7e00" stroke="#5a2f05" stroke-width="1.1"/><rect x="191.99" y="503.12" width="9.8" height="27.48" fill="#ff7e00" stroke="#5a2f05" stroke-width="1.1"/><rect x="211.86" y="506.77" width="9.8" height="23.83" fill="#ffff00" stroke="#55550a" stroke-width="1.1"/><rect x="231.74" y="508.96" width="9.8" height="21.64" fill="#ffff00" stroke="#55550a" stroke-width="1.1"/><rect x="251.61" y="510.90" width="9.8" height="19.70" fill="#ffff00" stroke="#55550a" stroke-width="1.1"/><rect x="271.49" y="512.12" width="9.8" height="18.48" fill="#ffff00" stroke="#55550a" stroke-width="1.1"/><rect x="291.36" y="513.82" width="9.8" height="16.78" fill="#ffff00" stroke="#55550a" stroke-width="1.1"/><rect x="311.24" y="513.82" width="9.8" height="16.78" fill="#ffff00" stroke="#55550a" stroke-width="1.1"/><rect x="331.11" y="511.39" width="9.8" height="19.21" fill="#ffff00" stroke="#55550a" stroke-width="1.1"/><rect x="350.99" y="512.60" width="9.8" height="18.00" fill="#ffff00" stroke="#55550a" stroke-width="1.1"/><rect x="370.86" y="515.52" width="9.8" height="15.08" fill="#ffff00" stroke="#55550a" stroke-width="1.1"/><rect x="390.74" y="514.79" width="9.8" height="15.81" fill="#ffff00" stroke="#55550a" stroke-width="1.1"/><rect x="410.61" y="514.79" width="9.8" height="15.81" fill="#ffff00" stroke="#55550a" stroke-width="1.1"/><rect x="430.49" y="511.14" width="9.8" height="19.46" fill="#ffff00" stroke="#55550a" stroke-width="1.1"/><rect x="450.36" y="509.68" width="9.8" height="20.92" fill="#ffff00" stroke="#55550a" stroke-width="1.1"/><rect x="470.24" y="510.66" width="9.8" height="19.94" fill="#ffff00" stroke="#55550a" stroke-width="1.1"/><rect x="490.11" y="510.66" width="9.8" height="19.94" fill="#ffff00" stroke="#55550a" stroke-width="1.1"/><rect x="509.99" y="511.63" width="9.8" height="18.97" fill="#ffff00" stroke="#55550a" stroke-width="1.1"/><rect x="529.86" y="509.68" width="9.8" height="20.92" fill="#ffff00" stroke="#55550a" stroke-width="1.1"/></g>
<path d="M67.7 530.6H544.7" stroke="#c0d0e0" stroke-width="1"/>
<g stroke="#c0d0e0" stroke-width="1"><path d="M67.70 530.6v6"/><path d="M87.58 530.6v6"/><path d="M107.45 530.6v6"/><path d="M127.33 530.6v6"/><path d="M147.20 530.6v6"/><path d="M167.07 530.6v6"/><path d="M186.95 530.6v6"/><path d="M206.82 530.6v6"/><path d="M226.70 530.6v6"/><path d="M246.57 530.6v6"/><path d="M266.45 530.6v6"/><path d="M286.32 530.6v6"/><path d="M306.20 530.6v6"/><path d="M326.07 530.6v6"/><path d="M345.95 530.6v6"/><path d="M365.82 530.6v6"/><path d="M385.70 530.6v6"/><path d="M405.57 530.6v6"/><path d="M425.45 530.6v6"/><path d="M445.32 530.6v6"/><path d="M465.20 530.6v6"/><path d="M485.07 530.6v6"/><path d="M504.95 530.6v6"/><path d="M524.83 530.6v6"/><path d="M544.70 530.6v6"/></g>
<g font-size="7.6" fill="#111" stroke="#111" stroke-width=".15"><text x="57.5" y="533.10" text-anchor="end">0</text><text x="57.5" y="508.78" text-anchor="end">100</text><text x="57.5" y="484.46" text-anchor="end">200</text><text x="57.5" y="460.14" text-anchor="end">300</text><text x="57.5" y="435.82" text-anchor="end">400</text><text x="57.5" y="411.50" text-anchor="end">500</text></g>
<text transform="translate(38 466.3) rotate(-90)" text-anchor="middle" font-size="7.8" fill="#111" stroke="#111" stroke-width=".15">AQI</text>
<g font-size="7.7" fill="#666" letter-spacing=".22"><text transform="translate(79.94 541.5) rotate(-45)" text-anchor="end">8 PM</text><text transform="translate(99.81 541.5) rotate(-45)" text-anchor="end">9 PM</text><text transform="translate(119.69 541.5) rotate(-45)" text-anchor="end">10 PM</text><text transform="translate(139.56 541.5) rotate(-45)" text-anchor="end">11 PM</text><text transform="translate(159.44 541.5) rotate(-45)" text-anchor="end">Mar 09, 2021 12 AM</text><text transform="translate(179.31 541.5) rotate(-45)" text-anchor="end">1 AM</text><text transform="translate(199.19 541.5) rotate(-45)" text-anchor="end">2 AM</text><text transform="translate(219.06 541.5) rotate(-45)" text-anchor="end">3 AM</text><text transform="translate(238.94 541.5) rotate(-45)" text-anchor="end">4 AM</text><text transform="translate(258.81 541.5) rotate(-45)" text-anchor="end">5 AM</text><text transform="translate(278.69 541.5) rotate(-45)" text-anchor="end">6 AM</text><text transform="translate(298.56 541.5) rotate(-45)" text-anchor="end">7 AM</text><text transform="translate(318.44 541.5) rotate(-45)" text-anchor="end">8 AM</text><text transform="translate(338.31 541.5) rotate(-45)" text-anchor="end">9 AM</text><text transform="translate(358.19 541.5) rotate(-45)" text-anchor="end">10 AM</text><text transform="translate(378.06 541.5) rotate(-45)" text-anchor="end">11 AM</text><text transform="translate(397.94 541.5) rotate(-45)" text-anchor="end">12 PM</text><text transform="translate(417.81 541.5) rotate(-45)" text-anchor="end">1 PM</text><text transform="translate(437.69 541.5) rotate(-45)" text-anchor="end">2 PM</text><text transform="translate(457.56 541.5) rotate(-45)" text-anchor="end">3 PM</text><text transform="translate(477.44 541.5) rotate(-45)" text-anchor="end">4 PM</text><text transform="translate(497.31 541.5) rotate(-45)" text-anchor="end">5 PM</text><text transform="translate(517.19 541.5) rotate(-45)" text-anchor="end">6 PM</text><text transform="translate(537.06 541.5) rotate(-45)" text-anchor="end">7 PM</text></g>
<rect x="269.3" y="608" width="10.6" height="7.7" fill="#ccc"/>
<text x="283.2" y="615.2" font-size="8.3" font-weight="bold" fill="#333">AQI</text>
</svg></div>

<div id="cc" class="abs">
<div id="cch" class="abs"><div style="top:4.5px;font-size:9.97px;line-height:12px">Current Conditions</div><div style="top:19.5px;font-size:7.9px;line-height:10px">observed at</div><div style="top:33px;font-size:9.94px;line-height:12px">Mar 9, 2021 7:00 PM (LT)</div></div>
<div id="ccy" class="abs"><div style="height:10.5px"></div>86 AQI<br>Moderate<br>PM2.5</div>
<div id="hm" class="abs">Health Message</div>
<div id="hmt" class="abs">The AQI is between 51 and 100. Air quality is<br>acceptable; however, pollution in this range<br>may pose a moderate health concern for a<br>very small number of individuals. People<br>who are unusually sensitive to ozone or<br>particle pollution may experience respiratory<br>symptoms.</div>
</div>
</body></html>
